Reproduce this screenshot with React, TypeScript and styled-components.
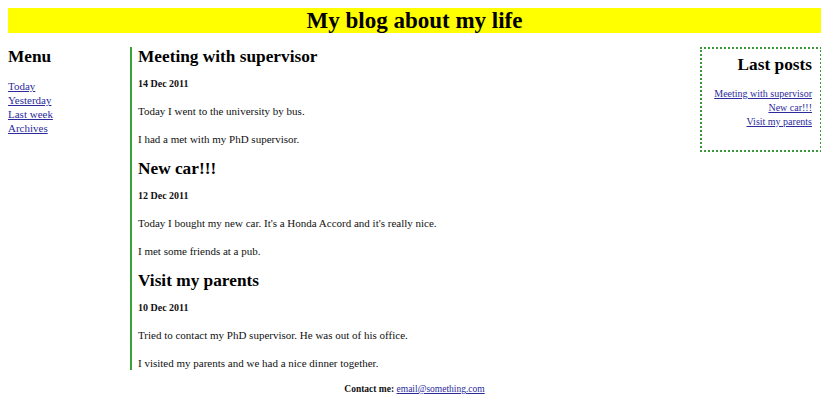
import React from "react";
import styled, { createGlobalStyle } from "styled-components";

const Global = createGlobalStyle`
  html, body { background: #ffffff; }
  body {
    margin: 8px;
    font-family: "Liberation Serif", "Times New Roman", serif;
    color: #111;
  }
  a { color: #2b2b9c; }
`;

const Header = styled.header`
  background: #ffff00;
  height: 25px;
  display: flex;
  align-items: center;
  justify-content: center;
`;

const Title = styled.h1`
  margin: 0;
  font-size: 23px;
  line-height: 25px;
  font-weight: bold;
  color: #000;
`;

const Columns = styled.div`
  display: flex;
  align-items: flex-start;
  margin-top: 14px;
`;

const Menu = styled.nav`
  width: 122px;
  flex: none;
`;

const Heading = styled.h2<{ $align?: string }>`
  margin: 0;
  font-size: 17.3px;
  line-height: 20px;
  font-weight: bold;
  color: #000;
  text-align: ${(p) => p.$align || "left"};
`;

const LinkList = styled.ul<{ $align?: string; $top: number; $size?: number }>`
  list-style: none;
  margin: ${(p) => p.$top}px 0 0;
  padding: 0;
  text-align: ${(p) => p.$align || "left"};
  font-size: ${(p) => p.$size || 11}px;
  line-height: 14px;
  white-space: nowrap;
`;

const Main = styled.main`
  flex: 1;
  border-left: 2px solid #3aa23a;
  padding-left: 6px;
  display: flex;
  flex-direction: column;
  gap: 13px;
`;

const Post = styled.article`
  display: flex;
  flex-direction: column;
`;

const PostDate = styled.div`
  margin: 11px 0 14px;
  font-size: 10px;
  line-height: 12px;
  font-weight: bold;
`;

const Para = styled.p`
  margin: 0;
  font-size: 11px;
  line-height: 14px;
  & + & { margin-top: 14px; }
`;

const Sidebar = styled.aside`
  flex: none;
  margin-left: 10px;
  margin-right: -1px;
  border: 2px dotted #3a9a3a;
  padding: 6px 8px 21px 6px;
  width: 104px;
`;

const Footer = styled.footer`
  margin-top: 13px;
  text-align: center;
  font-size: 9.5px;
  line-height: 12px;
  font-weight: bold;
  & a { font-weight: normal; }
`;

const posts = [
  {
    title: "Meeting with supervisor",
    date: "14 Dec 2011",
    paras: ["Today I went to the university by bus.", "I had a met with my PhD supervisor."],
  },
  {
    title: "New car!!!",
    date: "12 Dec 2011",
    paras: ["Today I bought my new car. It's a Honda Accord and it's really nice.", "I met some friends at a pub."],
  },
  {
    title: "Visit my parents",
    date: "10 Dec 2011",
    paras: ["Tried to contact my PhD supervisor. He was out of his office.", "I visited my parents and we had a nice dinner together."],
  },
];

export default function App() {
  return (
    <>
      <Global />
      <Header>
        <Title>My blog about my life</Title>
      </Header>
      <Columns>
        <Menu>
          <Heading>Menu</Heading>
          <LinkList $top={12}>
            <li><a href="#">Today</a></li>
            <li><a href="#">Yesterday</a></li>
            <li><a href="#">Last week</a></li>
            <li><a href="#">Archives</a></li>
          </LinkList>
        </Menu>
        <Main>
          {posts.map((p) => (
            <Post key={p.title}>
              <Heading>{p.title}</Heading>
              <PostDate>{p.date}</PostDate>
              {p.paras.map((t) => (
                <Para key={t}>{t}</Para>
              ))}
            </Post>
          ))}
        </Main>
        <Sidebar>
          <Heading $align="right">Last posts</Heading>
          <LinkList $align="right" $top={12} $size={10}>
            <li><a href="#">Meeting with supervisor</a></li>
            <li><a href="#">New car!!!</a></li>
            <li><a href="#">Visit my parents</a></li>
          </LinkList>
        </Sidebar>
      </Columns>
      <Footer>
        Contact me: <a href="#">email@something.com</a>
      </Footer>
    </>
  );
}
